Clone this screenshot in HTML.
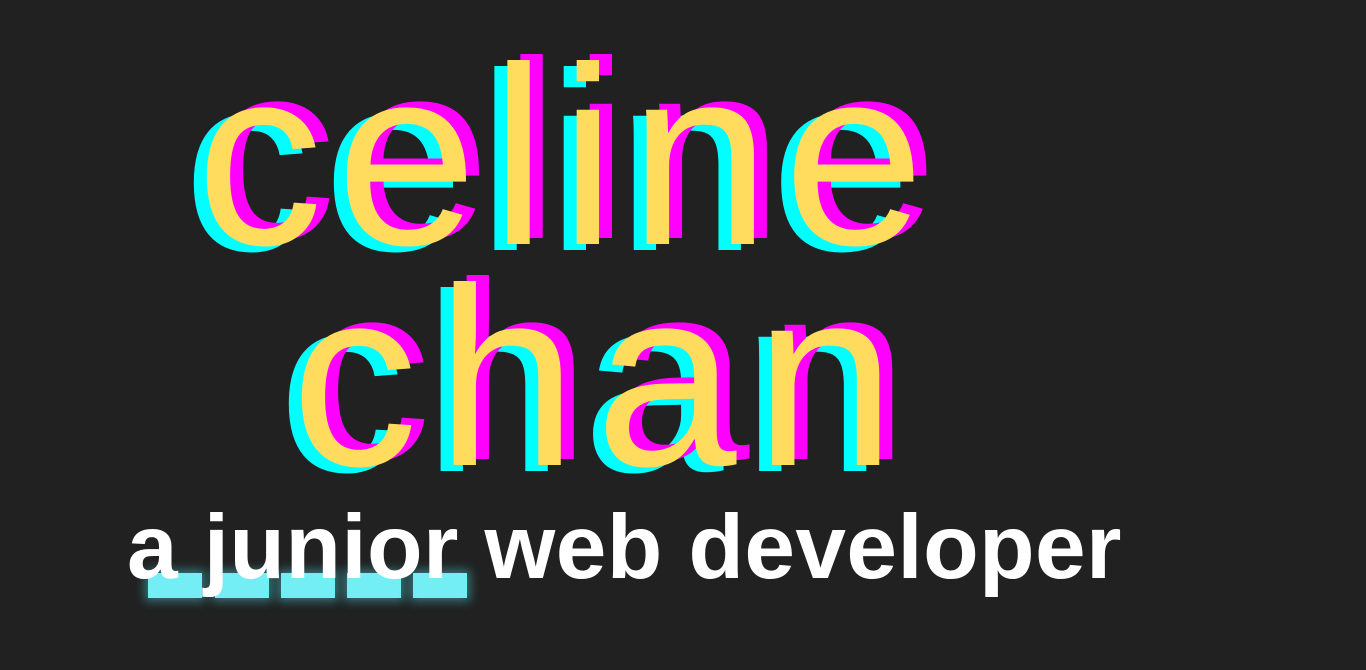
<!DOCTYPE html>
<html><head><meta charset="utf-8"><style>
html,body{margin:0;padding:0}
body{width:1366px;height:670px;background:#212121;position:relative;overflow:hidden}
.big{position:absolute;font-family:"Liberation Sans",sans-serif;font-size:254px;line-height:1;color:#ffdc5e;white-space:nowrap;
text-shadow:13px -6px 0 #ff00ff,-13px 6px 0 #00ffff;}
.sub{position:absolute;left:127px;top:502px;font-family:"Liberation Sans",sans-serif;font-weight:bold;font-size:91px;line-height:1;color:#fff;white-space:nowrap;letter-spacing:0.4px}
.blk{position:absolute;top:573px;height:25px;width:54px;background:#72eef4;box-shadow:0 0 10px 3px rgba(80,230,240,.45)}
</style></head><body>
<div class="blk" style="left:148px"></div>
<div class="blk" style="left:215px"></div>
<div class="blk" style="left:281px"></div>
<div class="blk" style="left:347px"></div>
<div class="blk" style="left:413px"></div>
<div class="big" style="left:196px;top:29px;letter-spacing:13px">celine</div>
<div class="big" style="left:291px;top:250px;letter-spacing:18px">chan</div>
<div class="sub">a junior web developer</div>
</body></html>
